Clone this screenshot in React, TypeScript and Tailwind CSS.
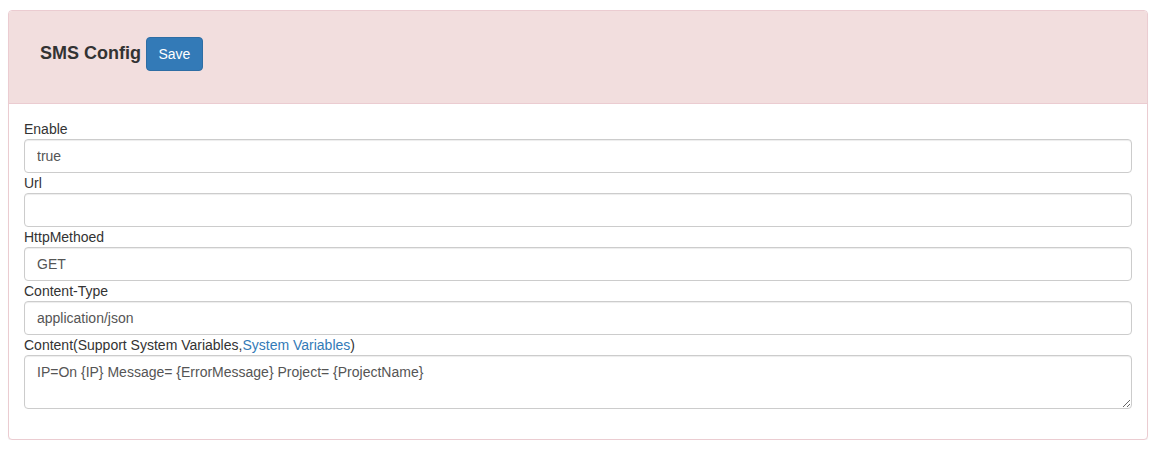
import { useState } from "react";

const fields = [
  { label: "Enable", value: "true" },
  { label: "Url", value: "" },
  { label: "HttpMethoed", value: "GET" },
  { label: "Content-Type", value: "application/json" },
];

const inputCls =
  "block w-full h-[34px] px-3 py-1.5 text-[14px] leading-5 text-[#555] bg-white border border-[#ccc] rounded-[4px] shadow-[inset_0_1px_1px_rgba(0,0,0,0.075)] outline-none";

export default function App() {
  const [values, setValues] = useState(fields.map((f) => f.value));
  const [content, setContent] = useState(
    "IP=On {IP} Message= {ErrorMessage} Project= {ProjectName}"
  );

  return (
    <div className="pt-[10px] pl-[8px] pr-[9px] font-['Liberation_Sans',Arial,sans-serif] text-[14px] leading-5 text-[#333]">
      <div className="border border-[#ebccd1] rounded-[4px] bg-white shadow-[0_1px_1px_rgba(0,0,0,0.05)]">
        {/* Header */}
        <div className="h-[93px] bg-[#f2dede] rounded-t-[3px] border-b border-[#ebccd1] pl-[31px] pt-[26px] flex items-start">
          <h3 className="text-[18px] font-bold leading-[33px] mr-[5px]">SMS Config</h3>
          <button className="h-[34px] px-[11.5px] text-[14px] text-white bg-[#337ab7] border border-[#2e6da4] rounded-[4px]">
            Save
          </button>
        </div>

        {/* Body */}
        <div className="px-[15px] pt-[15px] pb-[30px]">
          {fields.map((f, i) => (
            <div key={f.label}>
              <label className="block">{f.label}</label>
              <input
                className={inputCls}
                value={values[i]}
                onChange={(e) =>
                  setValues((v) => v.map((x, j) => (j === i ? e.target.value : x)))
                }
              />
            </div>
          ))}
          <div>
            <label className="block">
              Content(Support System Variables,
              <a href="#" className="text-[#337ab7]">System Variables</a>)
            </label>
            <textarea
              rows={2}
              className="block w-full h-[54px] px-3 py-1.5 text-[14px] leading-5 text-[#555] bg-white border border-[#ccc] rounded-[4px] shadow-[inset_0_1px_1px_rgba(0,0,0,0.075)] outline-none"
              value={content}
              onChange={(e) => setContent(e.target.value)}
            />
          </div>
        </div>
      </div>
    </div>
  );
}
